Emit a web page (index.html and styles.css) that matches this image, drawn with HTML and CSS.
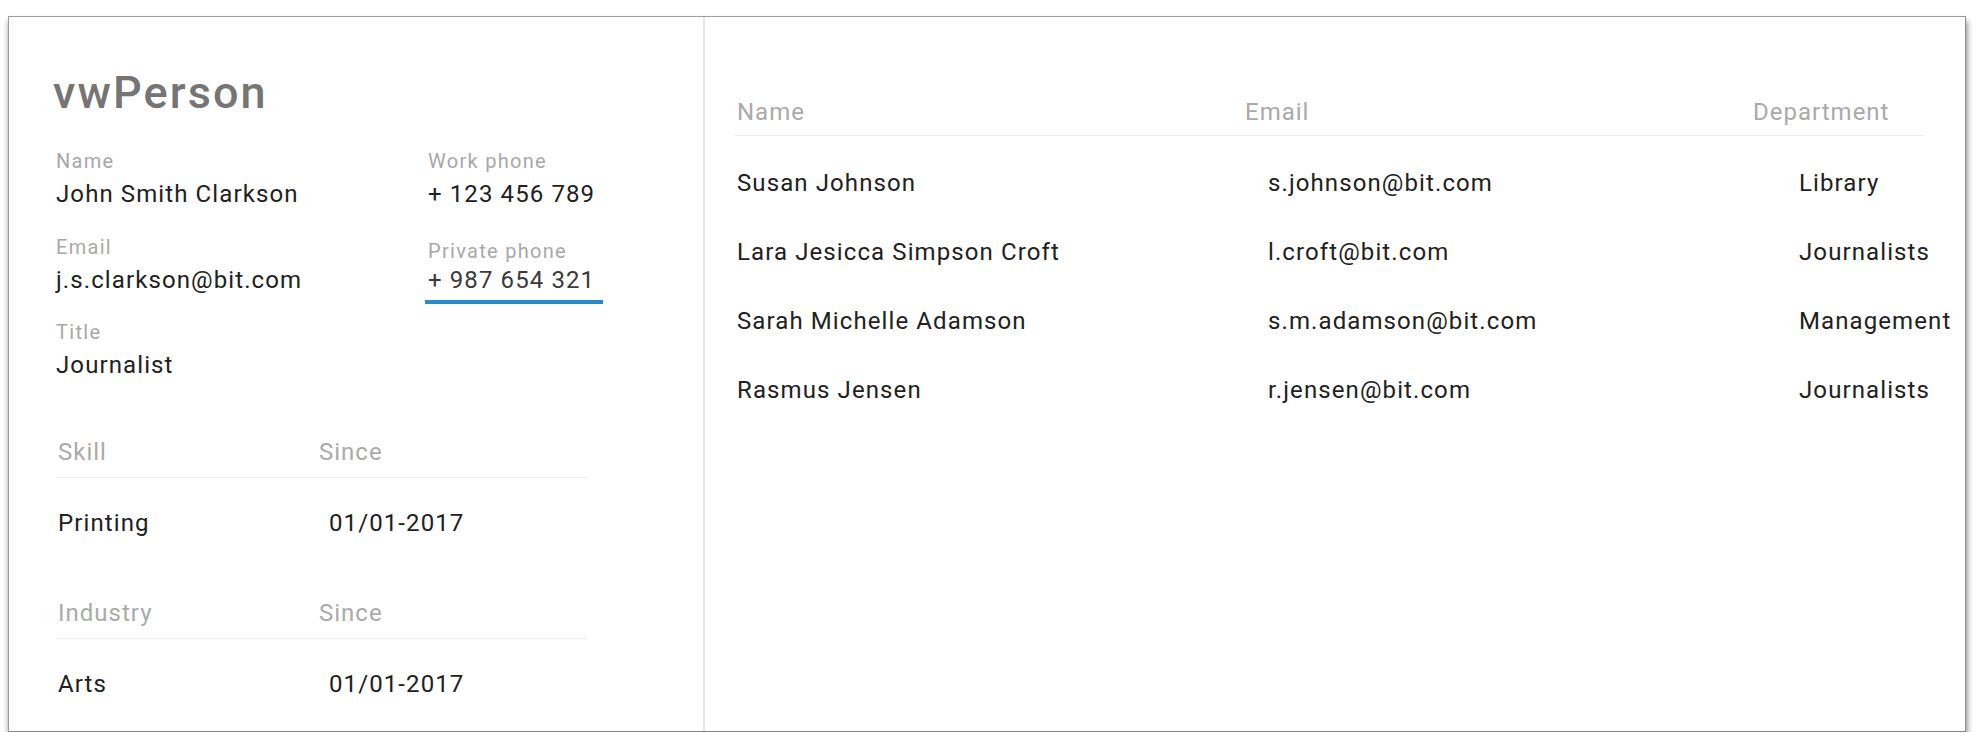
FILE: index.html
```html
<!DOCTYPE html>
<html lang="en">
<head>
<meta charset="utf-8">
<title>vwPerson</title>
<link rel="stylesheet" href="styles.css">
</head>
<body>
<div class="card">
  <section class="person">
    <h1 class="title">vwPerson</h1>
    <div class="fields">
      <div class="field">
        <div class="label">Name</div>
        <div class="value">John Smith Clarkson</div>
      </div>
      <div class="field">
        <div class="label">Work phone</div>
        <div class="value">+ 123 456 789</div>
      </div>
      <div class="field">
        <div class="label">Email</div>
        <div class="value">j.s.clarkson@bit.com</div>
      </div>
      <div class="field field-focused">
        <div class="label">Private phone</div>
        <div class="value input">+ 987 654 321</div>
      </div>
      <div class="field">
        <div class="label">Title</div>
        <div class="value">Journalist</div>
      </div>
    </div>

    <div class="mini-table">
      <div class="mini-head"><span>Skill</span><span>Since</span></div>
      <div class="mini-row"><span>Printing</span><span class="date">01/01-2017</span></div>
    </div>
    <div class="mini-table">
      <div class="mini-head"><span>Industry</span><span>Since</span></div>
      <div class="mini-row"><span>Arts</span><span class="date">01/01-2017</span></div>
    </div>
  </section>

  <section class="people">
    <div class="list">
      <div class="list-head"><span>Name</span><span>Email</span><span>Department</span></div>
      <div class="list-row"><span>Susan Johnson</span><span>s.johnson@bit.com</span><span>Library</span></div>
      <div class="list-row"><span>Lara Jesicca Simpson Croft</span><span>l.croft@bit.com</span><span>Journalists</span></div>
      <div class="list-row"><span>Sarah Michelle Adamson</span><span>s.m.adamson@bit.com</span><span>Management</span></div>
      <div class="list-row"><span>Rasmus Jensen</span><span>r.jensen@bit.com</span><span>Journalists</span></div>
    </div>
  </section>
</div>
</body>
</html>
```
FILE: styles.css
```css
* { box-sizing: border-box; }

html, body {
  margin: 0;
  padding: 0;
  background: #ffffff;
}

body {
  font-family: Roboto, "Liberation Sans", sans-serif;
  color: #212121;
  overflow: hidden;
}

.card {
  margin: 16px 0 0 8px;
  width: 1958px;
  height: 716px;
  border: 1px solid #9c9c9c;
  border-bottom-color: #858585;
  border-right-color: #8f8f8f;
  background: #fff;
  box-shadow: 1px 5px 6px rgba(0, 0, 0, 0.5);
  display: grid;
  grid-template-columns: 696px 1fr;
}

/* ---------- left panel ---------- */
.person {
  border-right: 2px solid #e6e6e6;
  padding: 50px 0 0 44px;
}

.title {
  margin: 0;
  font-size: 45px;
  line-height: 52px;
  font-weight: 500;
  letter-spacing: 2.1px;
  color: #757575;
}

.fields {
  margin: 30px 0 0 3px;
  display: grid;
  grid-template-columns: 372px 200px;
  row-gap: 25.5px;
}

.label {
  font-size: 20px;
  line-height: 24px;
  letter-spacing: 1.3px;
  color: #a8a8a8;
}

.value {
  margin-top: 6px;
  font-size: 24px;
  line-height: 30px;
  letter-spacing: 1.1px;
  color: #212121;
}

.field-focused .label {
  padding-top: 4px;
}

.field-focused .value {
  margin-top: 2px;
}

.input {
  width: 178px;
  margin-left: -3px;
  padding: 0 0 5px 3px;
  border-bottom: 4px solid #2b89c7;
  margin-bottom: -9px;
  color: #3a3a3a;
}

.mini-table {
  margin: 57px 0 0 3px;
  width: 531px;
}

.mini-table + .mini-table {
  margin-top: 60px;
}

.mini-head,
.mini-row {
  display: grid;
  grid-template-columns: 261px 1fr;
  padding-left: 2px;
  font-size: 24px;
  line-height: 30px;
  letter-spacing: 1px;
}

.mini-head {
  color: #aaaaaa;
  padding-bottom: 10px;
  border-bottom: 1px solid #ececec;
}

.mini-row {
  padding-top: 30px;
  color: #212121;
  letter-spacing: 1.1px;
}

.mini-row .date {
  padding-left: 10px;
}

/* ---------- right panel ---------- */
.people {
  padding: 80px 0 0 30px;
  min-width: 0;
}

.list {
  width: 1189px;
}

.list-head {
  display: grid;
  grid-template-columns: 508px 508px max-content;
  padding-left: 2px;
  padding-bottom: 8px;
  border-bottom: 1px solid #ececec;
  font-size: 24px;
  line-height: 30px;
  letter-spacing: 1px;
  color: #aaaaaa;
  white-space: nowrap;
}

.list-row {
  display: grid;
  grid-template-columns: 531px 531px max-content;
  padding: 32px 0 7px 2px;
  font-size: 24px;
  line-height: 30px;
  letter-spacing: 1.1px;
  color: #212121;
  white-space: nowrap;
}
```
